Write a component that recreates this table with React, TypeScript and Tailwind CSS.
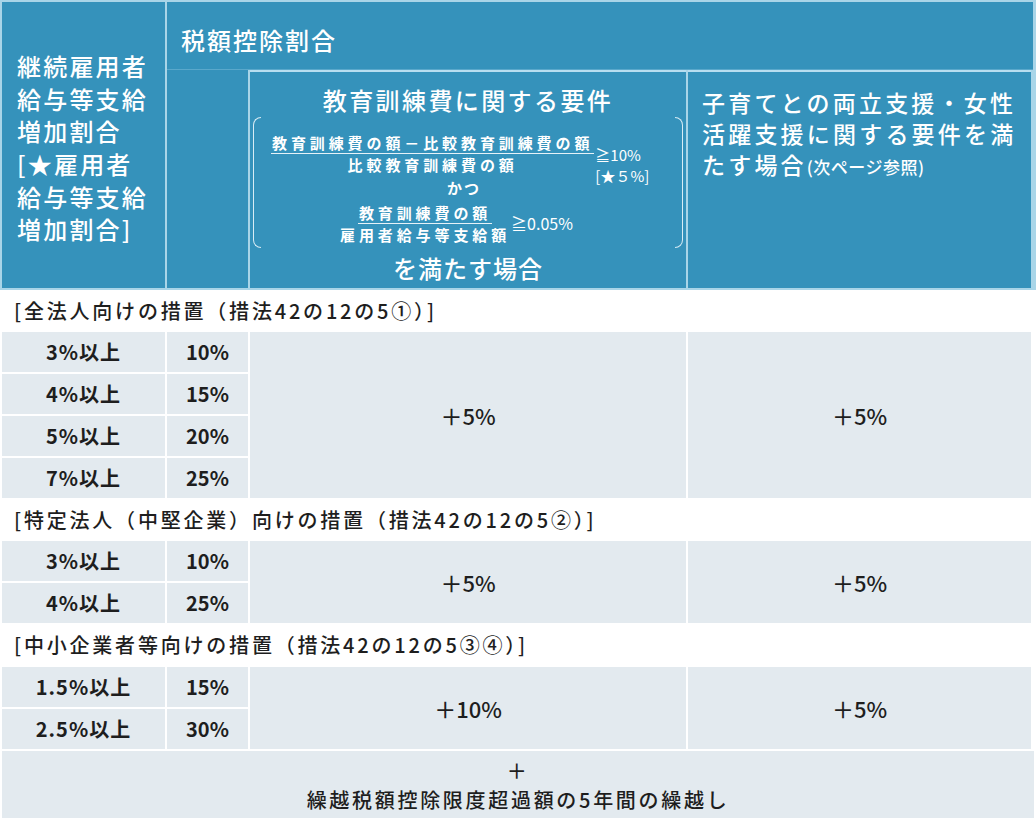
import React from "react";

const BLUE = "bg-[#3592bb]";
const CELL = "bg-[#e3eaef]";

type Section = {
  label: string;
  rows: [string, string][];
  edu: string;
  child: string;
};

const sections: Section[] = [
  {
    label: "[全法人向けの措置（措法42の12の5①）]",
    rows: [
      ["3%以上", "10%"],
      ["4%以上", "15%"],
      ["5%以上", "20%"],
      ["7%以上", "25%"],
    ],
    edu: "＋5%",
    child: "＋5%",
  },
  {
    label: "[特定法人（中堅企業）向けの措置（措法42の12の5②）]",
    rows: [
      ["3%以上", "10%"],
      ["4%以上", "25%"],
    ],
    edu: "＋5%",
    child: "＋5%",
  },
  {
    label: "[中小企業者等向けの措置（措法42の12の5③④）]",
    rows: [
      ["1.5%以上", "15%"],
      ["2.5%以上", "30%"],
    ],
    edu: "＋10%",
    child: "＋5%",
  },
];

function Bracket({ side }: { side: "l" | "r" }) {
  return (
    <div
      className={
        side === "l"
          ? "w-[8px] self-stretch rounded-l-[9px] border-y-[1.5px] border-l-[1.5px] border-[#d8ecf5]"
          : "w-[8px] self-stretch rounded-r-[9px] border-y-[1.5px] border-r-[1.5px] border-[#d8ecf5]"
      }
    />
  );
}

function Fraction({ num, den }: { num: string; den: string }) {
  return (
    <div className="flex flex-col items-center">
      <div className="border-b-[1.5px] border-[#e6f2f8] px-[1px] text-[15px] font-bold leading-[20px] tracking-[3.9px]">
        {num}
      </div>
      <div className="text-[15px] font-bold leading-[21px] tracking-[3.9px]">{den}</div>
    </div>
  );
}

function Header() {
  return (
    <div className="flex gap-[2px] bg-[#a9d5e8] p-[2px] text-white">
      <div className={`${BLUE} flex h-[286px] w-[163px] items-center pl-[15px] pt-[6px]`}>
        <p className="text-[24px] font-medium leading-[32.6px] tracking-[2.2px]">
          継続雇用者
          <br />
          給与等支給
          <br />
          増加割合
          <br />
          [★雇用者
          <br />
          給与等支給
          <br />
          増加割合]
        </p>
      </div>

      <div className="flex w-[866px] flex-col">
        <div
          className={`${BLUE} h-[68px] border-b border-[#5aa8cb] pl-[14px] pt-[24px] text-[24px] font-medium leading-[28px] tracking-[2px]`}
        >
          税額控除割合
        </div>
        <div className="flex flex-1 gap-[2px] bg-[#a9d5e8]">
          <div className={`${BLUE} w-[81px]`} />

          <div className={`${BLUE} flex w-[436px] flex-col border-t-2 border-[#b8def0]`}>
            <div className="mt-[14px] text-center text-[24px] font-medium leading-[28px] tracking-[2.4px]">
              教育訓練費に関する要件
            </div>
            <div className="mx-[3px] mt-[3px] flex h-[131px]">
              <Bracket side="l" />
              <div className="flex flex-1 flex-col pt-[16px]">
                <div className="flex items-start pl-[10px]">
                  <Fraction num="教育訓練費の額－比較教育訓練費の額" den="比較教育訓練費の額" />
                  <p className="mb-[-12px] ml-[1px] mt-[11px] text-[15px] leading-[21px]">
                    ≧10%
                    <br />
                    [★５%]
                  </p>
                </div>
                <div className="mt-[3px] pl-[186px] text-[15px] font-bold leading-[20px] tracking-[2px]">
                  かつ
                </div>
                <div className="mt-[5px] flex items-center pl-[79px]">
                  <Fraction num="教育訓練費の額" den="雇用者給与等支給額" />
                  <div className="ml-[1px] mt-[-2px] text-[16px] leading-[20px]">≧0.05%</div>
                </div>
              </div>
              <Bracket side="r" />
            </div>
            <div className="mt-[6px] text-center text-[24px] font-medium leading-[28px] tracking-[1px]">
              を満たす場合
            </div>
          </div>

          <div className={`${BLUE} w-[343px] border-t-2 border-[#b8def0] pl-[14px] pt-[15px]`}>
            <p className="text-[23px] font-medium leading-[31px] tracking-[3.2px]">
              子育てとの両立支援・女性
              <br />
              活躍支援に関する要件を満
              <br />
              たす場合<span className="text-[17px] tracking-[0.5px]">(次ページ参照)</span>
            </p>
          </div>
        </div>
      </div>
    </div>
  );
}

function SectionBlock({ s, labelH }: { s: Section; labelH: string }) {
  const span = s.rows.length === 4 ? "row-span-4" : "row-span-2";
  return (
    <>
      <div
        className={`${labelH} flex items-center pl-[14px] text-[20px] font-medium tracking-[2.8px] text-[#1e1e1e]`}
      >
        {s.label}
      </div>
      <div className="grid grid-cols-[163px_81px_436px_343px] auto-rows-[40px] gap-[2px] px-[2px] text-[#1e1e1e]">
        {s.rows.map(([a, b], i) => (
          <React.Fragment key={i}>
            <div
              className={`${CELL} col-start-1 flex items-center justify-center text-[20px] font-semibold tracking-[1px]`}
            >
              {a}
            </div>
            <div
              className={`${CELL} col-start-2 flex items-center justify-center text-[20px] font-semibold`}
            >
              {b}
            </div>
          </React.Fragment>
        ))}
        <div
          className={`${CELL} ${span} col-start-3 row-start-1 flex items-center justify-center text-[22px] font-medium`}
        >
          {s.edu}
        </div>
        <div
          className={`${CELL} ${span} col-start-4 row-start-1 flex items-center justify-center text-[22px] font-medium`}
        >
          {s.child}
        </div>
      </div>
    </>
  );
}

export default function App() {
  return (
    <div
      className="h-[822px] w-[1036px] overflow-hidden bg-white"
      style={{ fontFamily: '"Noto Sans CJK JP", "Noto Sans", sans-serif' }}
    >
      <Header />
      <SectionBlock s={sections[0]} labelH="h-[42px]" />
      <SectionBlock s={sections[1]} labelH="h-[43px]" />
      <SectionBlock s={sections[2]} labelH="h-[44px]" />
      <div className="px-[2px] pt-[2px]">
        <div
          className={`${CELL} flex h-[67px] flex-col items-center justify-center text-[20px] font-medium leading-[29px] tracking-[2.7px] text-[#1e1e1e]`}
        >
          <div>＋</div>
          <div>繰越税額控除限度超過額の5年間の繰越し</div>
        </div>
      </div>
    </div>
  );
}
